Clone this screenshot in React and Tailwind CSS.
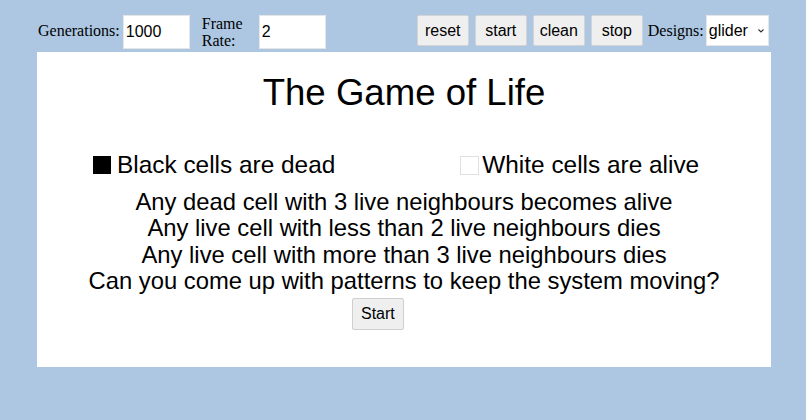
export default function App() {
  const sans = { fontFamily: '"Liberation Sans", Arial, sans-serif' };
  return (
    <div className="min-h-[420px] w-[806px] bg-[#adc7e3] pt-[15px] font-['Liberation_Serif',serif] text-[16px] text-black">
      <div className="flex h-[34px] items-start pl-[38px]">
        <span className="mt-[4px] mr-[3px]">Generations:</span>
        <input
          className="h-[34px] w-[67px] border border-[#e6e6e6] bg-white px-[2px] text-[16px] outline-none font-['Liberation_Sans',sans-serif]"
          defaultValue="1000"
        />
        <span className="ml-[12px] w-[52px] leading-[17px]">Frame Rate:</span>
        <input
          className="ml-[5px] h-[34px] w-[67px] border border-[#e6e6e6] bg-white px-[2px] text-[16px] outline-none font-['Liberation_Sans',sans-serif]"
          defaultValue="2"
        />
        <div className="ml-[91px] flex gap-[6px] font-['Liberation_Sans',sans-serif]">
          {['reset', 'start', 'clean', 'stop'].map((b) => (
            <button
              key={b}
              className="h-[31px] w-[52px] rounded-[2px] border border-[#d4d4d4] bg-[#efefef] text-[16px]"
            >
              {b}
            </button>
          ))}
        </div>
        <span className="ml-[5px] mt-[4px] mr-[2px]">Designs:</span>
        <div className="relative flex h-[31px] w-[63px] items-center border border-[#e6e6e6] bg-white pl-[2px] font-['Liberation_Sans',sans-serif]">
          <span className="text-[16px]">glider</span>
          <svg className="absolute right-[4px] top-[13px]" width="6" height="4" viewBox="0 0 6 4">
            <path d="M0.5 0.5 L3 3 L5.5 0.5" fill="none" stroke="#333" strokeWidth="1.1" />
          </svg>
        </div>
      </div>
      <div className="ml-[37px] mt-[3px] h-[315px] w-[734px] bg-white pt-[20px] text-center" style={sans}>
        <h1 className="text-[36.6px] leading-[41px]">The Game of Life</h1>
        <div className="mt-[38px] flex items-center pl-[56px] text-[24.4px] leading-[28px]">
          <span className="flex items-center">
            <span className="mr-[6px] inline-block h-[18px] w-[18px] bg-black" />
            Black cells are dead
          </span>
          <span className="ml-[125px] flex items-center">
            <span className="mr-[3px] inline-block h-[19px] w-[19px] border border-[#e0e0e0] bg-white" />
            White cells are alive
          </span>
        </div>
        <div className="mt-[10px] text-[23.8px] leading-[26.4px]">
          <p>Any dead cell with 3 live neighbours becomes alive</p>
          <p>Any live cell with less than 2 live neighbours dies</p>
          <p>Any live cell with more than 3 live neighbours dies</p>
          <p>Can you come up with patterns to keep the system moving?</p>
        </div>
        <div className="mt-[3px] flex pl-[315px]">
          <button className="h-[32px] rounded-[2px] border border-[#cfcfcf] bg-[#efefef] px-[8px] text-[16px]">
            Start
          </button>
        </div>
      </div>
    </div>
  );
}
